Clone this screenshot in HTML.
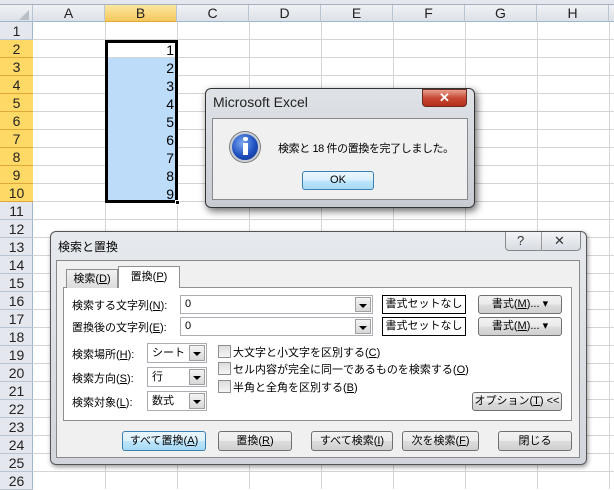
<!DOCTYPE html><html><head><meta charset="utf-8"><style>
*{margin:0;padding:0;box-sizing:border-box}
body{width:614px;height:489px;overflow:hidden;background:#fff;position:relative;font-family:"Liberation Sans","Noto Sans CJK JP",sans-serif;font-size:11px;color:#000}
.a{position:absolute}
#top{left:0;top:0;width:614px;height:5px;background:#e4e8ee;border-bottom:1px solid #a8b0bc}
#grid{left:33px;top:22px;width:581px;height:467px;background:
repeating-linear-gradient(to bottom,transparent 0,transparent 17px,#d4d4d4 17px,#d4d4d4 18px),#fff}
.vl{position:absolute;top:22px;width:1px;height:467px;background:#d4d4d4}
#ch{left:0;top:5px;width:614px;height:17px;background:linear-gradient(#f0f2f5,#dde2e8);border-bottom:1px solid #9eb6ce}
.chc{position:absolute;top:5px;height:17px;border-right:1px solid #b8c4d2;text-align:center;font-size:14px;line-height:17px;color:#222}
#rh{left:0;top:22px;width:33px;height:467px;background:#e4e8ee;border-right:1px solid #9eb6ce}
.r{position:absolute;left:0;width:33px;height:18px;border-bottom:1px solid #b8c4d2;text-align:center;font-size:14px;line-height:18px;color:#222}
.hl{background:#ffd966;border-bottom-color:#e0a83a}
.btn{position:absolute;border:1px solid #707070;border-radius:3px;background:linear-gradient(#f2f2f2 0,#ebebeb 50%,#dddddd 51%,#cfcfcf);text-align:center;line-height:17px;font-size:11px;white-space:nowrap;overflow:hidden}
.lbl{position:absolute;font-size:11px;white-space:nowrap}
.inp{position:absolute;background:#fff;border:1px solid #abadb3;font-size:11px;line-height:16px;padding-left:4px;white-space:nowrap}
.dd{position:absolute;width:16px;background:linear-gradient(#f4f4f4,#d8d8d8);border:1px solid #a0a0a0}
.dd:after{content:"";position:absolute;left:3px;top:6px;border:4px solid transparent;border-top:4px solid #000;border-bottom:0}
.cb{position:absolute;width:13px;height:13px;border:1px solid #8e8f8f;background:linear-gradient(#dcdcdc,#f6f6f6)}
.fmt{position:absolute;border:1px solid #000;background:#fff;text-align:center;line-height:16px;white-space:nowrap}
</style></head><body>
<div class="a" id="top"></div>
<div class="a" id="grid"></div>
<div class="vl" style="left:105px"></div><div class="vl" style="left:177px"></div><div class="vl" style="left:249px"></div><div class="vl" style="left:321px"></div><div class="vl" style="left:393px"></div><div class="vl" style="left:465px"></div><div class="vl" style="left:537px"></div><div class="vl" style="left:609px"></div>
<div class="a" style="left:107px;top:58px;width:68px;height:143px;background:#bcdcfa"></div>
<div class="a" style="left:105px;top:40px;width:73px;height:163px;border:3px solid #000"></div>
<div class="a" style="left:175px;top:200px;width:5px;height:5px;background:#000;border:1px solid #fff"></div>
<div class="a" style="left:108px;top:41px;width:66px;font-size:14px;text-align:right;line-height:18px">1<br>2<br>3<br>4<br>5<br>6<br>7<br>8<br>9</div>
<div class="a" id="ch"></div>
<div class="a" style="left:0;top:5px;width:33px;height:17px;border-right:1px solid #b8c4d2"></div>
<div class="a" style="left:19px;top:10px;border:5px solid transparent;border-right-color:#b8bec6;border-bottom-color:#b8bec6"></div>
<div class="chc" style="left:33px;width:72px">A</div>
<div class="chc" style="left:105px;width:72px;background:linear-gradient(#fbe6a0,#f6c85c);border-bottom:1px solid #e0a83a">B</div>
<div class="chc" style="left:177px;width:72px">C</div>
<div class="chc" style="left:249px;width:72px">D</div>
<div class="chc" style="left:321px;width:72px">E</div>
<div class="chc" style="left:393px;width:72px">F</div>
<div class="chc" style="left:465px;width:72px">G</div>
<div class="chc" style="left:537px;width:72px">H</div>
<div class="a" id="rh">
<div class="r" style="top:0">1</div><div class="r hl" style="top:18px">2</div><div class="r hl" style="top:36px">3</div><div class="r hl" style="top:54px">4</div><div class="r hl" style="top:72px">5</div><div class="r hl" style="top:90px">6</div><div class="r hl" style="top:108px">7</div><div class="r hl" style="top:126px">8</div><div class="r hl" style="top:144px">9</div><div class="r hl" style="top:162px">10</div><div class="r" style="top:180px">11</div><div class="r" style="top:198px">12</div><div class="r" style="top:216px">13</div><div class="r" style="top:234px">14</div><div class="r" style="top:252px">15</div><div class="r" style="top:270px">16</div><div class="r" style="top:288px">17</div><div class="r" style="top:306px">18</div><div class="r" style="top:324px">19</div><div class="r" style="top:342px">20</div><div class="r" style="top:360px">21</div><div class="r" style="top:378px">22</div><div class="r" style="top:396px">23</div><div class="r" style="top:414px">24</div><div class="r" style="top:432px">25</div><div class="r" style="top:450px">26</div>
</div>

<div class="a" style="left:205px;top:88px;width:270px;height:120px;border:1px solid #333;border-radius:6px;background:linear-gradient(#dfe3e8,#c8ccd2);box-shadow:2px 3px 8px rgba(0,0,0,.6)"></div>
<div class="lbl" style="left:213px;top:94px;font-size:14px;color:#222">Microsoft Excel</div>
<div class="a" style="left:422px;top:89px;width:45px;height:18px;border:1px solid #6b2a20;border-radius:0 0 4px 4px;background:linear-gradient(#e8a090,#c74a35 50%,#b52d1a);color:#fff;text-align:center;font-weight:bold;font-size:13px;line-height:16px">✕</div>
<div class="a" style="left:212px;top:118px;width:256px;height:82px;background:#f0f0f0;border:1px solid #8a8a8a"></div>
<div class="a" style="left:230px;top:132px;width:30px;height:30px;border-radius:50%;background:radial-gradient(circle at 40% 35%,#7aa8f0,#2050c0 55%,#102c80);border:2px solid #c8ccd4;box-shadow:0 0 0 1px #777"></div>
<div class="a" style="left:243px;top:137px;width:5px;height:4px;background:#fff;border-radius:2px"></div>
<div class="a" style="left:243px;top:143px;width:5px;height:12px;background:#fff"></div>
<div class="lbl" style="left:278px;top:140px;letter-spacing:-0.4px">検索と 18 件の置換を完了しました。</div>
<div class="btn" style="left:302px;top:171px;width:72px;height:19px;border-color:#3c7fb1;background:linear-gradient(#eaf6fd,#d9f0fc 50%,#bee6fd 51%,#a7d9f5)">OK</div>

<div class="a" style="left:50px;top:231px;width:537px;height:234px;border:1px solid #555;border-radius:6px;background:linear-gradient(#e6eaee,#d2d6dc);box-shadow:1px 2px 5px rgba(0,0,0,.4)"></div>
<div class="lbl" style="left:58px;top:238px;font-size:12px">検索と置換</div>
<div class="a" style="left:505px;top:232px;width:76px;height:19px;border:1px solid #888;border-top:0;border-radius:0 0 4px 4px;background:linear-gradient(#f2f4f6,#d8dce2)"></div>
<div class="a" style="left:541px;top:232px;width:1px;height:19px;background:#999"></div>
<div class="lbl" style="left:517px;top:233px;font-size:13px;color:#333">?</div>
<div class="lbl" style="left:554px;top:233px;font-size:13px;color:#333">✕</div>
<div class="a" style="left:56px;top:260px;width:524px;height:198px;background:#f0f0f0;border:1px solid #8a8a8a"></div>
<div class="a" style="left:63px;top:287px;width:509px;height:134px;background:#fff;border:1px solid #8e8f8f"></div>
<div class="a" style="left:66px;top:269px;width:52px;height:19px;border:1px solid #8e8f8f;border-bottom:0;background:linear-gradient(#f2f2f2,#dcdcdc);text-align:center;line-height:18px">検索(<u>D</u>)</div>
<div class="a" style="left:118px;top:266px;width:62px;height:22px;border:1px solid #8e8f8f;border-bottom:0;background:#fff;text-align:center;line-height:20px">置換(<u>P</u>)</div>
<div class="lbl" style="left:72px;top:297px">検索する文字列(<u>N</u>):</div>
<div class="inp" style="left:180px;top:295px;width:193px;height:19px">0</div>
<div class="dd" style="left:355px;top:297px;height:15px"></div>
<div class="fmt" style="left:382px;top:295px;width:84px;height:19px">書式セットなし</div>
<div class="btn" style="left:478px;top:295px;width:84px;height:19px">書式(<u>M</u>)... ▾</div>
<div class="lbl" style="left:72px;top:319px">置換後の文字列(<u>E</u>):</div>
<div class="inp" style="left:180px;top:317px;width:193px;height:19px">0</div>
<div class="dd" style="left:355px;top:319px;height:15px"></div>
<div class="fmt" style="left:382px;top:317px;width:84px;height:19px">書式セットなし</div>
<div class="btn" style="left:478px;top:317px;width:84px;height:19px">書式(<u>M</u>)... ▾</div>
<div class="lbl" style="left:72px;top:346px">検索場所(<u>H</u>):</div>
<div class="inp" style="left:147px;top:343px;width:60px;height:20px;line-height:18px">シート</div>
<div class="dd" style="left:189px;top:345px;height:16px"></div>
<div class="lbl" style="left:72px;top:370px">検索方向(<u>S</u>):</div>
<div class="inp" style="left:147px;top:367px;width:60px;height:20px;line-height:18px">行</div>
<div class="dd" style="left:189px;top:369px;height:16px"></div>
<div class="lbl" style="left:72px;top:394px">検索対象(<u>L</u>):</div>
<div class="inp" style="left:147px;top:391px;width:60px;height:20px;line-height:18px">数式</div>
<div class="dd" style="left:189px;top:393px;height:16px"></div>
<div class="cb" style="left:218px;top:345px"></div><div class="lbl" style="left:233px;top:344px">大文字と小文字を区別する(<u>C</u>)</div>
<div class="cb" style="left:218px;top:362px"></div><div class="lbl" style="left:233px;top:361px">セル内容が完全に同一であるものを検索する(<u>O</u>)</div>
<div class="cb" style="left:218px;top:380px"></div><div class="lbl" style="left:233px;top:379px">半角と全角を区別する(<u>B</u>)</div>
<div class="btn" style="left:472px;top:392px;width:90px;height:19px">オプション(<u>T</u>) &lt;&lt;</div>
<div class="btn" style="left:122px;top:431px;width:84px;height:20px;border-color:#3c7fb1;line-height:18px;background:linear-gradient(#eaf6fd,#d9f0fc 50%,#bee6fd 51%,#a7d9f5)">すべて置換(<u>A</u>)</div>
<div class="btn" style="left:218px;top:431px;width:74px;height:20px;line-height:18px">置換(<u>R</u>)</div>
<div class="btn" style="left:311px;top:431px;width:82px;height:20px;line-height:18px">すべて検索(<u>I</u>)</div>
<div class="btn" style="left:402px;top:431px;width:77px;height:20px;line-height:18px">次を検索(<u>F</u>)</div>
<div class="btn" style="left:498px;top:431px;width:74px;height:20px;line-height:18px">閉じる</div>
</body></html>
